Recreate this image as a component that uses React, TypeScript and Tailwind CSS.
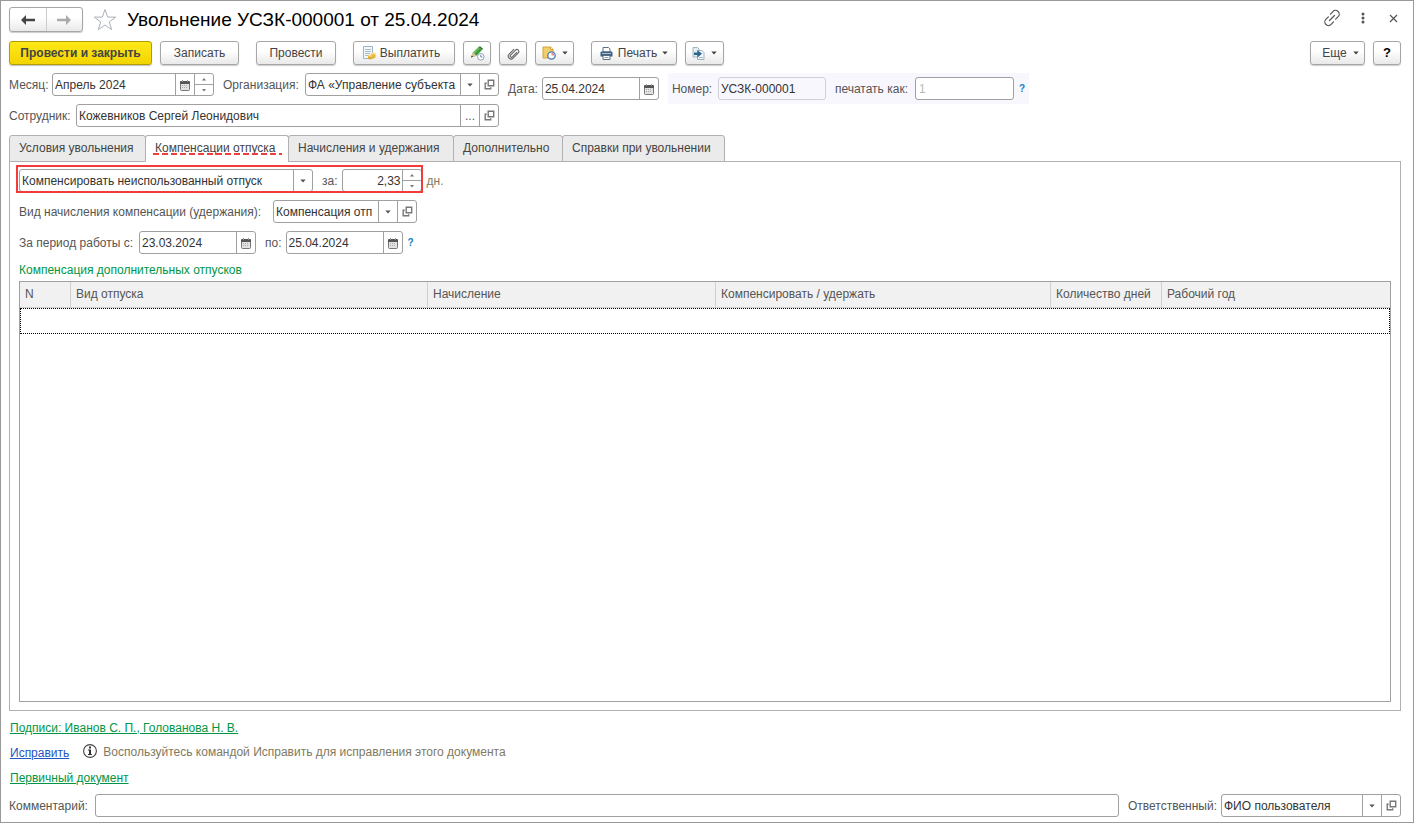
import { useState } from "react";
import type { ReactNode } from "react";

const BTN = "flex h-6 shrink-0 items-center justify-center rounded-[3px] border border-[#a6a6a6] bg-linear-to-b from-white from-40% to-[#e9e9e9] text-[#444] shadow-[0_1px_1px_rgba(0,0,0,0.2)]";
const FIELD = "flex h-[23px] shrink-0 overflow-hidden rounded-[3px] border border-[#a0a0a0] bg-white text-[#333]";
const INPUT = "min-w-0 flex-1 bg-transparent pl-0.5 outline-none";
const CELL = "flex w-[19px] shrink-0 items-center justify-center border-l border-[#a0a0a0] text-[#555]";
const LABEL = "shrink-0 whitespace-nowrap";

const TABS = [
  { title: "Условия увольнения", cls: "w-[137px]" },
  { title: "Компенсации отпуска", cls: "w-[144px]" },
  { title: "Начисления и удержания", cls: "w-[166px]" },
  { title: "Дополнительно", cls: "w-[110px]" },
  { title: "Справки при увольнении", cls: "w-[163px]" },
];

const COLUMNS = [
  { title: "N", cls: "w-[51px]" },
  { title: "Вид отпуска", cls: "w-[357px]" },
  { title: "Начисление", cls: "w-[288px]" },
  { title: "Компенсировать / удержать", cls: "w-[335px]" },
  { title: "Количество дней", cls: "w-[111px]" },
  { title: "Рабочий год", cls: "" },
];

function Caret() {
  return (
    <svg width="6" height="4" viewBox="0 0 6 4" fill="currentColor">
      <path d="M.3 .5h5.400L3 3.500z" />
    </svg>
  );
}

function CalendarIcon() {
  return (
    <svg className="mt-0.5" width="10" height="11" viewBox="0 0 10 11">
      <path d="M.5 2.500h9v7a1 1 0 0 1-1 1h-7a1 1 0 0 1-1-1z" fill="#e2e2e2" stroke="#777" />
      <path d="M0 2a1 1 0 0 1 1-1h8a1 1 0 0 1 1 1v2H0z" fill="#555" />
      <path d="M2.500 0v2M7.500 0v2" stroke="#999" />
      <path d="M2 5.500h6M2 7.500h6" stroke="#aaa" strokeDasharray="1 1" />
    </svg>
  );
}

function OpenIcon() {
  return (
    <svg width="11" height="11" viewBox="0 0 11 11" fill="none" stroke="#777" strokeWidth="1.4">
      <path d="M4.200 1.200h5.500v5.500H4.200z" />
      <path d="M2.700 4.200H1.200v5.500h5.500V8.300" />
    </svg>
  );
}

function CalendarButton() {
  return <button className={CELL} aria-label="Календарь"><CalendarIcon /></button>;
}

function OpenButton() {
  return <button className={CELL} aria-label="Открыть"><OpenIcon /></button>;
}

function Spinner() {
  return (
    <span className="flex w-[19px] shrink-0 flex-col border-l border-[#a0a0a0] text-[#777]">
      <button className="flex flex-1 items-center justify-center border-b border-[#a0a0a0]" aria-label="Больше">
        <svg width="4" height="3" viewBox="0 0 4 3" fill="currentColor"><path d="M2 0l2 2.5H0z" /></svg>
      </button>
      <button className="flex flex-1 items-center justify-center" aria-label="Меньше">
        <svg width="4" height="3" viewBox="0 0 4 3" fill="currentColor"><path d="M0 0h4L2 2.5z" /></svg>
      </button>
    </span>
  );
}

function DateField({ id, value }: { id: string; value: string }) {
  return (
    <div className={`${FIELD} w-[117px]`}>
      <input id={id} defaultValue={value} className={INPUT} />
      <CalendarButton />
    </div>
  );
}

// the arrow cell shares the grid row with the select, so a click on it opens the list
function Combo({ id, value, className, children }: { id: string; value: string; className: string; children?: ReactNode }) {
  return (
    <div className={`${FIELD} ${className}`}>
      <div className="grid min-w-0 flex-1 grid-cols-[minmax(0,1fr)_19px]">
        <select id={id} className="col-span-2 col-start-1 row-start-1 min-w-0 appearance-none bg-transparent pr-5 pl-0.5 outline-none">
          <option>{value}</option>
        </select>
        <span className={`${CELL} pointer-events-none col-start-2 row-start-1`}><Caret /></span>
      </div>
      {children}
    </div>
  );
}

function TitleBar() {
  return (
    <header className="flex items-center">
      <div className="flex h-[25px] w-[74px] rounded-[3px] border border-[#a6a6a6] bg-linear-to-b from-white from-40% to-[#e9e9e9] shadow-[0_1px_1px_rgba(0,0,0,0.2)]">
        <button className="flex flex-1 items-center justify-center border-r border-[#ccc]" aria-label="Назад">
          <svg width="14" height="10" viewBox="0 0 14 10"><path d="M0 5l5-5v3.7h9v2.6H5V10z" fill="#444" /></svg>
        </button>
        <button className="flex flex-1 items-center justify-center" aria-label="Вперед">
          <svg width="14" height="10" viewBox="0 0 14 10"><path d="M14 5L9 0v3.7H0v2.6h9V10z" fill="#aaa" /></svg>
        </button>
      </div>
      <button className="ml-2.5" aria-label="В избранное">
        <svg width="24" height="24" viewBox="0 0 24 24" fill="#fff" stroke="#a9b0ba" strokeWidth="1">
          <path d="M12 1.5l2.7 7.6h8l-6.4 4.8 2.4 7.8L12 17l-6.7 4.7 2.4-7.8L1.3 9.1h8z" />
        </svg>
      </button>
      <h1 className="ml-2.5 text-[19px] leading-6 text-black">Увольнение УСЗК-000001 от 25.04.2024</h1>
      <div className="mr-[3px] ml-auto flex items-center pb-[3px] text-[#555]">
        <button aria-label="Ссылка">
          <svg width="18" height="18" viewBox="0 0 18 18" fill="none" stroke="currentColor" strokeWidth="1.2" strokeLinecap="round">
            <path d="M7.5 5.2l2.4-2.6a3.6 3.6 0 0 1 5.3 5l-2.6 2.6M10.5 12.8l-2.4 2.6a3.6 3.6 0 0 1-5.3-5l2.6-2.6M6.5 11.5l5-5" />
          </svg>
        </button>
        <button className="ml-5" aria-label="Меню">
          <svg width="4" height="12" viewBox="0 0 4 12" fill="currentColor">
            <circle cx="2" cy="2" r="1.5" /><circle cx="2" cy="6" r="1.5" /><circle cx="2" cy="10" r="1.5" />
          </svg>
        </button>
        <button className="ml-6" aria-label="Закрыть">
          <svg width="9" height="9" viewBox="0 0 9 9" stroke="currentColor" strokeWidth="1.2"><path d="M1 1l7 7M8 1L1 8" /></svg>
        </button>
      </div>
    </header>
  );
}

function Toolbar() {
  return (
    <div className="mt-[9px] flex items-center gap-[17px]">
      <div className="flex gap-2">
        <button className="flex h-6 w-[143px] items-center justify-center rounded-[3px] border border-[#b59d00] bg-linear-to-b from-[#ffe817] to-[#f3d400] font-bold text-[#444] shadow-[0_1px_1px_rgba(0,0,0,0.25)]">
          Провести и закрыть
        </button>
        <button className={`${BTN} w-[79px]`}>Записать</button>
      </div>
      <button className={`${BTN} w-[80px]`}>Провести</button>
      <div className="flex gap-2">
        <button className={`${BTN} w-[102px] gap-1 pr-1.5`}>
          <svg width="14" height="14" viewBox="0 0 14 14">
            <path d="M1.5 .5h9v12h-9z" fill="#f4f8fb" stroke="#9db4c4" />
            <path d="M3 3.5h6M3 5.5h6M3 7.5h5M3 9.5h3" stroke="#a5bccb" />
            <path d="M6 9.5v3c1 1.3 4 1 4.500 0v-3z" fill="#e0a92c" />
            <path d="M9 7.500v4c1 1.300 4 1 4.500 0v-4z" fill="#e8b83c" />
            <ellipse cx="8" cy="9.800" rx="2.200" ry="1" fill="#f6d878" />
            <ellipse cx="11.300" cy="7.600" rx="2.300" ry="1.100" fill="#f9df86" />
          </svg>
          Выплатить
        </button>
        <button className={`${BTN} w-7`} aria-label="Подписать">
          <svg width="15" height="15" viewBox="0 0 15 15">
            <path d="M1 11.500L3 6.500 8.500 1 12 4 6.500 9.800z" fill="#3f9b3a" />
            <path d="M3 6.500L8.500 1l1.300 1.100L4.500 8z" fill="#71c063" />
            <path d="M8.500 1L10 .3l3 2.500L12 4z" fill="#2d6e2a" />
            <path d="M1 11.500l2-5 3.500 3.300z" fill="#e2c79a" />
            <path d="M1 11.500l.8-2 1.300 1.200z" fill="#333" />
            <circle cx="10.800" cy="10.800" r="3.300" fill="#fff" stroke="#8da5b5" />
            <path d="M10.800 8.800v2.200h1.600" fill="none" stroke="#6d8596" />
          </svg>
        </button>
        <button className={`${BTN} w-7`} aria-label="Присоединенные файлы">
          <svg width="13" height="13" viewBox="0 0 13 13" fill="none" stroke="#666" strokeWidth="1.1" strokeLinecap="round">
            <path d="M9.800 5.300l-4.500 4.600a1.200 1.200 0 0 1-1.800-1.700l5-5.100a1.900 1.900 0 0 1 2.800 2.700l-5.200 5.300a2.800 2.800 0 0 1-4-4l4.700-4.800" />
          </svg>
        </button>
        <button className={`${BTN} w-[39px] gap-1.5`} aria-label="Отложить">
          <svg width="14" height="14" viewBox="0 0 14 14">
            <path d="M1 1h7.500l2.500 2.500V12H1z" fill="#f2cf6a" stroke="#cfa23a" />
            <path d="M8.500 1v2.500H11" fill="#fff3c6" stroke="#cfa23a" />
            <circle cx="9.500" cy="9.500" r="3.700" fill="#fff" stroke="#4a78ad" strokeWidth="1.300" />
            <path d="M9.500 9.500V6.800A2.700 2.700 0 0 1 12.200 9.500z" fill="#e58a8a" />
          </svg>
          <Caret />
        </button>
      </div>
      <div className="flex gap-2">
        <button className={`${BTN} w-[86px] gap-[5px]`}>
          <svg width="13" height="13" viewBox="0 0 13 13">
            <path d="M3 .5h5.500L10 2v3H3z" fill="#fff" stroke="#5a6f84" />
            <path d="M1.500 4.500h10a1 1 0 0 1 1 1v4h-12v-4a1 1 0 0 1 1-1z" fill="#40617f" />
            <path d="M2 6.500h9" stroke="#a9c3d9" />
            <path d="M3 8.500h7v4H3z" fill="#fff" stroke="#5a6f84" />
            <path d="M4.500 10.500h4" stroke="#8da5b5" />
          </svg>
          Печать
          <Caret />
        </button>
        <button className={`${BTN} w-[39px] gap-1.5`} aria-label="Создать на основании">
          <svg width="13" height="13" viewBox="0 0 13 13">
            <path d="M1 .5h4.500L7 2v8H1z" fill="#e6eef4" stroke="#9db4c4" />
            <path d="M5.500 3.500h4.500l2 2v7H5.500z" fill="#f4f8fb" stroke="#9db4c4" />
            <path d="M7 10.500h4" stroke="#a5bccb" />
            <path d="M2 5.500h3.500V3L10 6.800l-4.500 3.700V8H2z" fill="#2f6690" />
          </svg>
          <Caret />
        </button>
      </div>
      <div className="ml-auto flex gap-2">
        <button className={`${BTN} w-[55px] gap-1.5 pl-1.5`}>Еще <Caret /></button>
        <button className={`${BTN} w-7 text-[13px] font-bold text-black`}>?</button>
      </div>
    </div>
  );
}

function DocumentFields() {
  return (
    <div className="mt-2 flex items-start gap-[9px]">
      <div className="flex w-[490px] shrink-0 flex-col gap-2">
        <div className="flex items-center gap-1">
          <label htmlFor="month" className={`${LABEL} w-[39px]`}>Месяц:</label>
          <div className={`${FIELD} w-[162px]`}>
            <input id="month" defaultValue="Апрель 2024" className={INPUT} />
            <CalendarButton />
            <Spinner />
          </div>
          <label htmlFor="org" className={`${LABEL} ml-[5px] w-[78px]`}>Организация:</label>
          <Combo id="org" value="ФА «Управление субъекта" className="w-[194px]">
            <OpenButton />
          </Combo>
        </div>
        <div className="flex items-center gap-1">
          <label htmlFor="employee" className={`${LABEL} w-[63px]`}>Сотрудник:</label>
          <div className={`${FIELD} flex-1`}>
            <input id="employee" defaultValue="Кожевников Сергей Леонидович" className={INPUT} />
            <button className={CELL} aria-label="Выбрать">...</button>
            <OpenButton />
          </div>
        </div>
      </div>
      <div className="mt-1 flex items-center gap-1">
        <label htmlFor="date" className={LABEL}>Дата:</label>
        <DateField id="date" value="25.04.2024" />
      </div>
      <div className="flex h-[31px] items-center gap-1 bg-[#f7f7fd] px-1">
        <label htmlFor="number" className={`${LABEL} w-[42px]`}>Номер:</label>
        <input id="number" readOnly value="УСЗК-000001" className="h-[23px] w-[108px] rounded-[3px] border border-[#d0d0d8] bg-[#f7f7fd] pl-0.5 text-[#333] outline-none" />
        <label htmlFor="printAs" className={`${LABEL} ml-[5px] w-[76px]`}>печатать как:</label>
        <input id="printAs" placeholder="1" className="h-[23px] w-[99px] rounded-[3px] border border-[#a0a0a0] bg-white pl-[3px] outline-none placeholder:text-[#bbb]" />
        <button className="ml-px text-[10px] font-bold text-[#1a7fc1]">?</button>
      </div>
    </div>
  );
}

function CompensationPanel() {
  return (
    <section className="flex flex-1 flex-col border border-[#b0b0b0] px-[9px] pt-[7px] pb-2">
      <div className="flex items-center gap-[5px]">
        <div className="relative flex items-center">
          <Combo id="mode" value="Компенсировать неиспользованный отпуск" className="w-[294px]" />
          <label htmlFor="days" className={`${LABEL} mr-1 ml-[9px]`}>за:</label>
          <div className={`${FIELD} w-[80px]`}>
            <input id="days" defaultValue="2,33" className={`${INPUT} pr-px text-right`} />
            <Spinner />
          </div>
          <span className="pointer-events-none absolute -top-1 -right-px -bottom-px -left-[3px] border-2 border-[#f23c3c]" />
        </div>
        <span className="text-[#807a62]">дн.</span>
      </div>
      <div className="mt-2 flex items-center gap-1">
        <label htmlFor="kind" className={`${LABEL} w-[250px]`}>Вид начисления компенсации (удержания):</label>
        <Combo id="kind" value="Компенсация отп" className="w-[144px]">
          <OpenButton />
        </Combo>
      </div>
      <div className="mt-2 flex items-center gap-1">
        <label htmlFor="from" className={`${LABEL} w-[116px]`}>За период работы с:</label>
        <DateField id="from" value="23.03.2024" />
        <label htmlFor="to" className={`${LABEL} ml-[5px]`}>по:</label>
        <DateField id="to" value="25.04.2024" />
        <button className="ml-px text-[10px] font-bold text-[#1a7fc1]">?</button>
      </div>
      <h2 className="mt-2 leading-4 text-[#009646]">Компенсация дополнительных отпусков</h2>
      <div className="mt-[3px] flex-1 border border-[#a0a0a0]">
        <table className="w-full table-fixed border-separate border-spacing-0">
          <thead>
            <tr className="h-[26px] bg-[#f1f1f1] text-left">
              {COLUMNS.map((c) => (
                <th key={c.title} className={`border-r border-b border-[#d0d0d0] px-[5px] pb-0.5 font-normal whitespace-nowrap last:border-r-0 ${c.cls}`}>{c.title}</th>
              ))}
            </tr>
          </thead>
          <tbody>
            <tr>
              <td colSpan={6} className="h-[26px] border border-dotted border-black" />
            </tr>
          </tbody>
        </table>
      </div>
    </section>
  );
}

function Footer() {
  return (
    <footer className="flex flex-col gap-2 pt-2">
      <div className="flex h-[17px] items-center pl-px">
        <a href="#signatures" className="text-[#009646] underline">Подписи: Иванов С. П., Голованова Н. В.</a>
      </div>
      <div className="flex h-[17px] items-center pl-px">
        <a href="#fix" className="text-[#1f55c4] underline">Исправить</a>
        <svg className="mb-1 ml-3.5" width="14" height="14" viewBox="0 0 14 14">
          <circle cx="7" cy="7" r="6.400" fill="#fff" stroke="#444" strokeWidth="1.100" />
          <path d="M6 2.500h2v2H6zM5 5.500h3V10h1v1H5v-1h1V6.500H5z" fill="#333" />
        </svg>
        <span className="ml-1.5 pb-0.5 text-[#807a62]">Воспользуйтесь командой Исправить для исправления этого документа</span>
      </div>
      <div className="flex h-[17px] items-center pl-px">
        <a href="#source" className="text-[#009646] underline">Первичный документ</a>
      </div>
      <div className="flex items-center gap-1">
        <label htmlFor="comment" className={`${LABEL} w-[82px]`}>Комментарий:</label>
        <input id="comment" className="h-[23px] min-w-0 flex-1 rounded-[3px] border border-[#a0a0a0] pl-0.5 outline-none" />
        <label htmlFor="owner" className={`${LABEL} ml-[5px]`}>Ответственный:</label>
        <Combo id="owner" value="ФИО пользователя" className="w-[180px]">
          <OpenButton />
        </Combo>
      </div>
    </footer>
  );
}

export default function App() {
  const [tab, setTab] = useState(1);

  return (
    <div className="flex min-h-screen flex-col border border-[#999] bg-white pt-1.5 pr-3 pb-[5px] pl-2 font-['Liberation_Sans',Arial,sans-serif] text-[12px] text-[#555]">
      <TitleBar />
      <Toolbar />
      <DocumentFields />
      <nav className="mt-2 flex" role="tablist">
        {TABS.map((t, i) => (
          <button
            key={t.title}
            role="tab"
            aria-selected={i === tab}
            onClick={() => setTab(i)}
            className={`relative -mr-px -mb-px h-[27px] rounded-t-[3px] border border-[#b0b0b0] pb-0.5 pl-[9px] text-left whitespace-nowrap text-[#444] ${t.cls} ${i === tab ? "border-b-white bg-white" : "bg-[#ebebeb]"}`}
          >
            {t.title}
            {i === tab && (
              <span className="absolute right-[6px] bottom-[6px] left-[7px] h-0.5 bg-[repeating-linear-gradient(90deg,#f23c3c_0_6px,transparent_6px_9px)]" />
            )}
          </button>
        ))}
      </nav>
      <CompensationPanel />
      <Footer />
    </div>
  );
}
